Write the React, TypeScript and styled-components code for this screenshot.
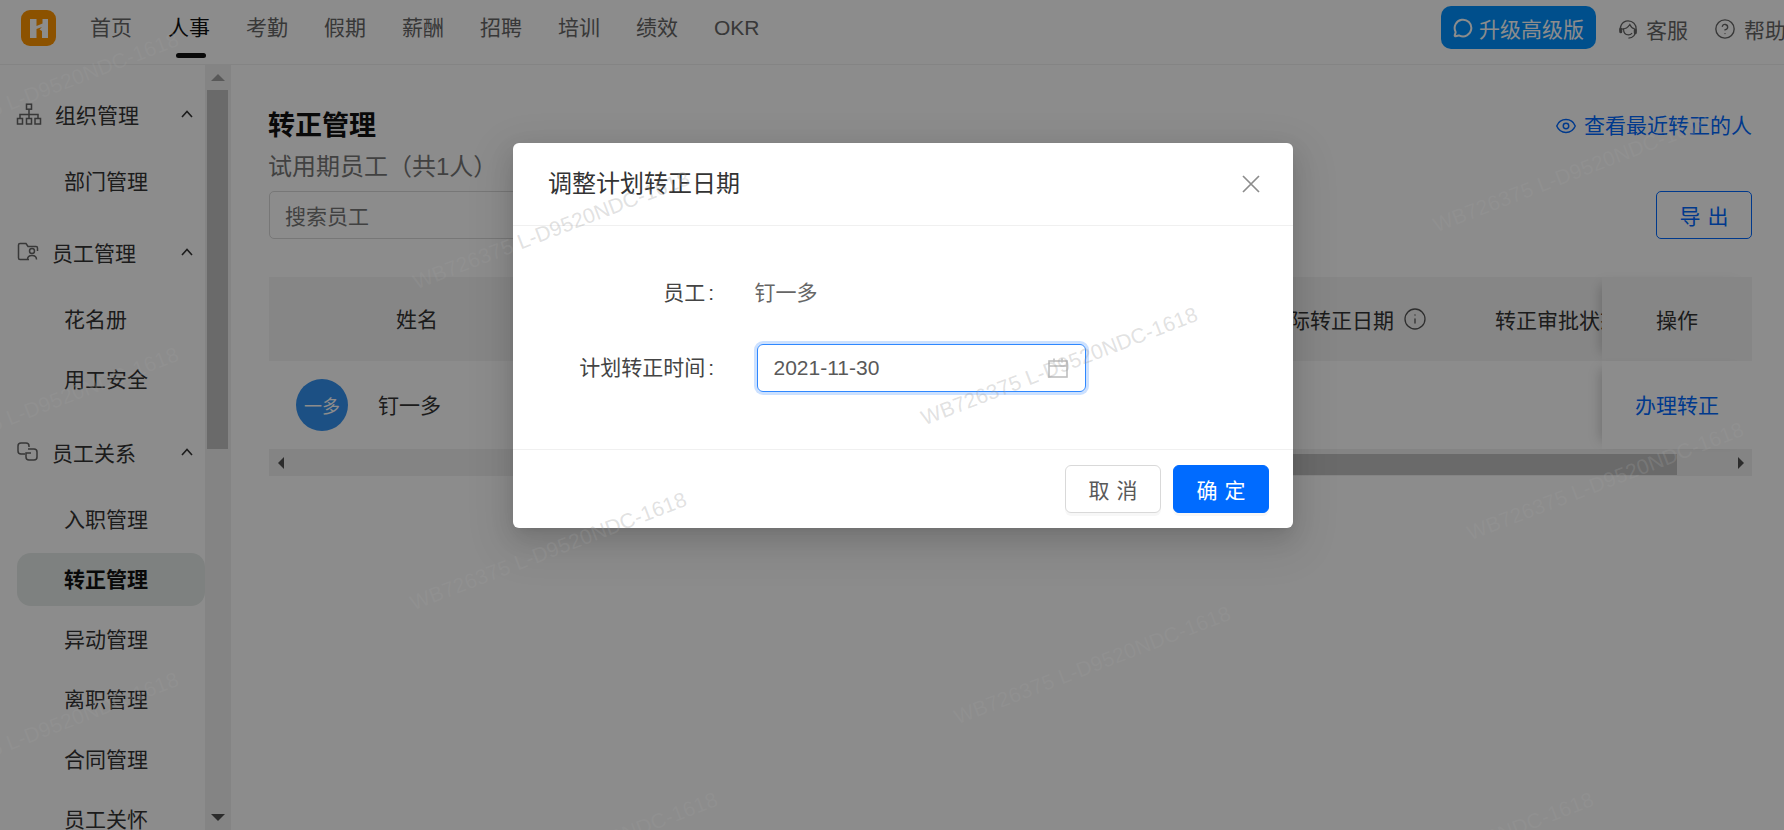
import React from "react";
import styled, { createGlobalStyle } from "styled-components";
import { CircleHelp, Eye, Info, MessageCircle } from "lucide-react";

const Global = createGlobalStyle`
  html, body { margin: 0; padding: 0; height: 100%; overflow: hidden; background: #fff; }
  body { font-family: "Liberation Sans", "Noto Sans CJK SC", sans-serif; font-size: 21px; color: #333; }
  * { box-sizing: border-box; }
`;

const Page = styled.div`
  width: 1784px; height: 830px; display: flex; flex-direction: column; overflow: hidden; position: relative;
`;

const Header = styled.header`
  height: 65px; flex: none; display: flex; align-items: center; padding: 0 0 9px 21px;
  border-bottom: 1px solid #f0f0f0; overflow: hidden;
`;
const Logo = styled.svg`
  width: 35px; height: 36px; flex: none;
`;
const TopNav = styled.nav`
  display: flex; gap: 36px; margin-left: 34px;
`;
const TopLink = styled.a<{ $active?: boolean }>`
  position: relative; min-width: 42px; line-height: 30px; color: ${(p) => (p.$active ? "#111" : "#666")};
  &::after {
    content: ""; display: ${(p) => (p.$active ? "block" : "none")}; position: absolute; left: 8px; top: 40px;
    width: 30px; height: 5px; border-radius: 3px; background: #111;
  }
`;
const HeaderRight = styled.div`
  margin-left: auto; margin-right: -2px; display: flex; align-items: center; flex: none;
`;
const UpgradeButton = styled.button`
  width: 155px; height: 43px; border: 0; border-radius: 10px; background: #0091ff; color: #fff;
  font: inherit; display: flex; align-items: center; gap: 6px; padding: 0 0 0 12px; margin-right: 22px;
`;
const HeaderLink = styled.span`
  display: flex; align-items: center; gap: 8px; color: #666; line-height: 30px; margin: 6px 26px 0 0;
  &:last-child { margin-right: 0; }
  svg { flex: none; margin-top: -3px; }
`;

const Content = styled.div`
  flex: 1; display: flex; min-height: 0;
`;
const Sidebar = styled.aside`
  width: 231px; flex: none; display: flex;
`;
const SideMenu = styled.div`
  width: 205px; flex: none; overflow: hidden; padding-top: 19px;
`;
const Group = styled.section<{ $tail: number }>`
  display: flex; flex-direction: column; gap: 7px; padding-bottom: ${(p) => p.$tail}px;
`;
const GroupHead = styled.div<{ $gap: number; $after: number }>`
  height: 60px; margin-bottom: ${(p) => p.$after}px; display: flex; align-items: center; padding: 0 12px 0 16px;
  gap: ${(p) => p.$gap}px; color: #333; flex: none;
  svg:last-child { margin-left: auto; }
`;
const SideItem = styled.div<{ $active?: boolean }>`
  height: 53px; flex: none; margin-left: 17px; padding-left: 47px; line-height: 53px; border-radius: 14px;
  background: ${(p) => (p.$active ? "#e6ebe9" : "transparent")};
  color: ${(p) => (p.$active ? "#111" : "#333")};
  font-weight: ${(p) => (p.$active ? 700 : 400)};
`;
const VScrollbar = styled.div`
  width: 26px; flex: none; background: #f1f1f1; display: flex; flex-direction: column; align-items: center;
  justify-content: space-between; position: relative;
`;
const VThumb = styled.div`
  position: absolute; left: 2px; top: 25px; width: 21px; height: 359px; background: #c1c1c1;
`;
const ArrowCell = styled.div`
  height: 25px; display: flex; align-items: center; justify-content: center;
`;
const Triangle = styled.i<{ $dir: "up" | "down" | "left" | "right"; $color: string }>`
  display: block; width: 0; height: 0; border-style: solid; border-color: transparent;
  ${(p) =>
    p.$dir === "up"
      ? `border-width: 0 7px 7px; border-bottom-color: ${p.$color};`
      : p.$dir === "down"
      ? `border-width: 7px 7px 0; border-top-color: ${p.$color};`
      : p.$dir === "left"
      ? `border-width: 6px 6px 6px 0; border-right-color: ${p.$color};`
      : `border-width: 6px 0 6px 6px; border-left-color: ${p.$color};`}
`;

const Main = styled.main`
  flex: 1; min-width: 0; padding: 43px 32px 0 38px;
`;
const TitleRow = styled.div`
  display: flex; align-items: center; justify-content: space-between; height: 36px;
`;
const Title = styled.h1`
  margin: 0 0 0 -1px; font-size: 27px; font-weight: 700; color: #111; line-height: 36px;
`;
const RecentLink = styled.a`
  display: flex; align-items: center; gap: 7px; color: #0069ff; line-height: 30px;
`;
const SubTitle = styled.div`
  margin: 5px 0 0 -1px; font-size: 24px; line-height: 36px; color: #777;
`;
const Toolbar = styled.div`
  margin-top: 6px; display: flex; justify-content: space-between;
`;
const Search = styled.input`
  width: 420px; height: 48px; border: 1px solid #d9d9d9; border-radius: 5px; padding: 3px 15px 0; font: inherit; color: #333;
  &::placeholder { color: #777; opacity: 1; }
`;
const OutlineButton = styled.button`
  width: 96px; height: 48px; border: 1.5px solid #0069ff; border-radius: 5px; background: #fff; color: #0069ff;
  font: inherit; padding: 0; letter-spacing: 7px; text-indent: 7px;
`;

const Table = styled.div`
  margin-top: 38px; width: 1483px; position: relative;
`;
const HeadRow = styled.div`
  height: 84px; display: flex; align-items: center; background: #f5f5f5; color: #333;
`;
const BodyRow = styled.div`
  height: 88px; display: flex; align-items: center; background: #fff;
`;
const NameHead = styled.div`
  width: 296px; flex: none; text-align: center; padding-bottom: 2px;
`;
const Filler = styled.div`
  flex: 1;
`;
const DateHead = styled.div`
  width: 159px; flex: none; display: flex; align-items: center; justify-content: space-between; white-space: nowrap;
`;
const StatusHead = styled.div`
  width: 107px; margin-left: 68px; flex: none; overflow: hidden; white-space: nowrap;
`;
const FixedCell = styled.div<{ $head?: boolean }>`
  width: 150px; height: 100%; flex: none; display: flex; align-items: center; justify-content: center;
  background: ${(p) => (p.$head ? "#f5f5f5" : "#fff")};
  color: ${(p) => (p.$head ? "#333" : "#0069ff")};
  padding-bottom: ${(p) => (p.$head ? 0 : 3)}px;
  box-shadow: -9px 0 12px -8px rgba(0, 0, 0, 0.22);
  position: relative;
`;
const Person = styled.div`
  display: flex; align-items: center; padding-left: 27px; gap: 30px;
`;
const PersonName = styled.span`
  padding-bottom: 2px;
`;
const Avatar = styled.div`
  width: 52px; height: 52px; border-radius: 50%; background: #3392f0; color: #fff; font-size: 18px;
  display: flex; align-items: center; justify-content: center;
`;
const HScrollbar = styled.div`
  height: 27px; background: #f1f1f1; display: flex; align-items: center; padding: 0 8px 0 9px;
`;
const HThumb = styled.div`
  height: 21px; margin: 4px 0 0; flex: 1; margin-left: 300px; margin-right: 61px; background: #c1c1c1;
`;

const Overlay = styled.div`
  position: absolute; inset: 0; background: rgba(0, 0, 0, 0.45); display: flex; justify-content: center;
  align-items: flex-start; padding: 143px 0 0 22px;
`;
const Dialog = styled.div`
  width: 780px; height: 385px; background: #fff; border-radius: 6px; display: flex; flex-direction: column;
  box-shadow: 0 4px 9px -6px rgba(0, 0, 0, 0.12), 0 9px 24px rgba(0, 0, 0, 0.12), 0 14px 42px 12px rgba(0, 0, 0, 0.07);
`;
const DialogHead = styled.div`
  height: 83px; flex: none; border-bottom: 1px solid #f0f0f0; display: flex; align-items: center;
  justify-content: space-between; padding: 0 33px 0 35px;
`;
const DialogTitle = styled.div`
  font-size: 24px; color: #333; line-height: 36px;
`;
const DialogBody = styled.div`
  flex: 1; padding-top: 43px; display: grid; grid-template-columns: 204px 329px; column-gap: 39.5px; row-gap: 27px;
  grid-auto-rows: 48px; align-items: center;
`;
const FieldLabel = styled.label`
  text-align: right; padding: 0 3px 4px 0; color: #444;
  &::after { content: ":"; margin: 0 0 0 3px; }
`;
const FieldValue = styled.div`
  color: #666; padding-bottom: 4px; margin-left: -2px;
`;
const DateBox = styled.div`
  height: 48px; border: 1.5px solid #2f88ff; border-radius: 6px; box-shadow: 0 0 0 3px rgba(0, 105, 255, 0.2);
  display: flex; align-items: center; justify-content: space-between; padding: 0 17px 0 16px; color: #595959;
`;
const DialogFoot = styled.div`
  height: 79px; flex: none; border-top: 1px solid #f0f0f0; padding: 15px 24px; display: flex; justify-content: flex-end; gap: 12px;
`;
const DialogButton = styled.button<{ $primary?: boolean }>`
  width: 96px; height: 48px; border-radius: 6px; font: inherit; padding: 0; letter-spacing: 7px; text-indent: 7px;
  border: 1.5px solid ${(p) => (p.$primary ? "#006bff" : "#d9d9d9")};
  background: ${(p) => (p.$primary ? "#006bff" : "#fff")};
  color: ${(p) => (p.$primary ? "#fff" : "#595959")};
  box-shadow: 0 3px 0 rgba(0, 0, 0, 0.03);
`;
const Watermarks = styled.div`
  position: absolute; inset: 0; overflow: hidden; pointer-events: none;
`;
const Mark = styled.span.attrs<{ $x: number; $y: number }>((p) => ({
  style: { left: p.$x, top: p.$y - 11 },
}))<{ $x: number; $y: number }>`
  position: absolute; white-space: nowrap; line-height: 22px; font-size: 21px; font-family: "Liberation Sans", sans-serif;
  letter-spacing: 0.2px; color: rgba(155, 155, 155, 0.3); transform: rotate(-21deg); transform-origin: 0 50%;
`;

const Chevron = () => (
  <svg width="12" height="8" viewBox="0 0 12 8" fill="none" stroke="#333" strokeWidth="1.6">
    <path d="M1 7l5-5.500L11 7" />
  </svg>
);
const OrgIcon = () => (
  <svg width="26" height="22" viewBox="0 0 26 22" fill="none" stroke="#666" strokeWidth="1.5">
    <rect x="10.5" y="1.2" width="5" height="5" />
    <rect x="1.5" y="15.5" width="5" height="5.5" />
    <rect x="10.5" y="15.5" width="5" height="5.5" />
    <rect x="19" y="15.5" width="5.5" height="5.5" />
    <path d="M13 6.500v5M4 15.500v-4h18v4M13 11.500v4" />
  </svg>
);
const FolderIcon = () => (
  <svg width="26" height="22" viewBox="0 0 26 22" fill="none" stroke="#666" strokeWidth="1.5">
    <path d="M13 18.500H4a1.500 1.500 0 0 1-1.500-1.500V4a1.500 1.500 0 0 1 1.500-1.500h6l2 3h8a1.500 1.500 0 0 1 1.500 1.500v3" />
    <circle cx="16" cy="10" r="2.500" />
    <path d="M11.500 18.500c0-2.800 2-4 4.500-4s4.500 1.200 4.500 4" />
  </svg>
);
const LinkedIcon = () => (
  <svg width="26" height="22" viewBox="0 0 26 22" fill="none" stroke="#666" strokeWidth="1.5">
    <path d="M9 13H5a3 3 0 0 1-3-3V5a3 3 0 0 1 3-3h5a3 3 0 0 1 3 3v1" />
    <path d="M12 8h6a3 3 0 0 1 3 3v5a3 3 0 0 1-3 3h-5a3 3 0 0 1-3-3v-4h5" />
  </svg>
);
const HeadsetIcon = () => (
  <svg width="20" height="21" viewBox="0 0 22 23" fill="none" stroke="#666" strokeWidth="1.300">
    <path d="M3 14.500C1 9 4.500 2 11 2c5.500 0 9 4 9 9 0 6-3.500 10-8.500 10" />
    <path d="M4 11c3 0 7-1.500 9-5 1 2.500 3.500 4.500 5.500 5" />
    <path d="M6 10.500c0 4 2 7 5.500 7 1.500 0 3-.8 4-2" />
    <rect x="2" y="10" width="2" height="5" rx="1" fill="#666" />
    <rect x="18" y="11" width="2" height="5" rx="1" fill="#666" />
  </svg>
);
const CalendarIcon = () => (
  <svg width="20" height="20" viewBox="0 0 20 20" fill="none" stroke="#bfbfbf" strokeWidth="1.600">
    <rect x="1" y="3" width="18" height="16" />
    <path d="M1 8h18M6 .5v4M14 .5v4" />
  </svg>
);
const CloseIcon = () => (
  <svg width="18" height="18" viewBox="0 0 18 18" fill="none" stroke="#8c8c8c" strokeWidth="1.700">
    <path d="M1 1l16 16M17 1L1 17" />
  </svg>
);

const topLinks = ["首页", "人事", "考勤", "假期", "薪酬", "招聘", "培训", "绩效", "OKR"];
const marks: [number, number][] = [
  [-97, 144], [-97, 459], [-97, 784], [414, 283], [411, 604], [922, 419],
  [955, 718], [1434, 226], [1468, 534], [442, 904], [1318, 904],
];

export default function App() {
  return (
    <Page>
      <Global />
      <Header>
        <Logo viewBox="0 0 35 36">
          <rect width="35" height="36" rx="9" fill="#ff9500" />
          <path d="M9 9h6.500v7l6-2.500V9H27v19h-6v-7l-2.500-1.500L21 17l-5.500 2v9H9z" fill="#fff" />
        </Logo>
        <TopNav>
          {topLinks.map((t) => (
            <TopLink key={t} $active={t === "人事"}>{t}</TopLink>
          ))}
        </TopNav>
        <HeaderRight>
          <UpgradeButton>
            <MessageCircle size={20} strokeWidth={2.4} />
            升级高级版
          </UpgradeButton>
          <HeaderLink><HeadsetIcon />客服</HeaderLink>
          <HeaderLink><CircleHelp size={22} strokeWidth={1.5} color="#666" />帮助</HeaderLink>
        </HeaderRight>
      </Header>
      <Content>
        <Sidebar>
          <SideMenu>
            <Group $tail={13.5}>
              <GroupHead $gap={13} $after={4}><OrgIcon />组织管理<Chevron /></GroupHead>
              <SideItem>部门管理</SideItem>
            </Group>
            <Group $tail={16}>
              <GroupHead $gap={10} $after={4}><FolderIcon />员工管理<Chevron /></GroupHead>
              <SideItem>花名册</SideItem>
              <SideItem>用工安全</SideItem>
            </Group>
            <Group $tail={0}>
              <GroupHead $gap={10} $after={4}><LinkedIcon />员工关系<Chevron /></GroupHead>
              <SideItem>入职管理</SideItem>
              <SideItem $active>转正管理</SideItem>
              <SideItem>异动管理</SideItem>
              <SideItem>离职管理</SideItem>
              <SideItem>合同管理</SideItem>
              <SideItem>员工关怀</SideItem>
            </Group>
          </SideMenu>
          <VScrollbar>
            <ArrowCell><Triangle $dir="up" $color="#a3a3a3" /></ArrowCell>
            <VThumb />
            <ArrowCell><Triangle $dir="down" $color="#505050" /></ArrowCell>
          </VScrollbar>
        </Sidebar>
        <Main>
          <TitleRow>
            <Title>转正管理</Title>
            <RecentLink><Eye size={22} strokeWidth={1.6} />查看最近转正的人</RecentLink>
          </TitleRow>
          <SubTitle>试用期员工（共1人）</SubTitle>
          <Toolbar>
            <Search placeholder="搜索员工" readOnly />
            <OutlineButton>导出</OutlineButton>
          </Toolbar>
          <Table>
            <HeadRow>
              <NameHead>姓名</NameHead>
              <Filler />
              <DateHead>实际转正日期<Info size={24} strokeWidth={1.3} color="#555" /></DateHead>
              <StatusHead>转正审批状态</StatusHead>
              <FixedCell $head>操作</FixedCell>
            </HeadRow>
            <BodyRow>
              <Person><Avatar>一多</Avatar><PersonName>钉一多</PersonName></Person>
              <Filler />
              <FixedCell>办理转正</FixedCell>
            </BodyRow>
            <HScrollbar>
              <Triangle $dir="left" $color="#505050" />
              <HThumb />
              <Triangle $dir="right" $color="#505050" />
            </HScrollbar>
          </Table>
        </Main>
      </Content>
      <Overlay>
        <Dialog>
          <DialogHead>
            <DialogTitle>调整计划转正日期</DialogTitle>
            <CloseIcon />
          </DialogHead>
          <DialogBody>
            <FieldLabel>员工</FieldLabel>
            <FieldValue>钉一多</FieldValue>
            <FieldLabel>计划转正时间</FieldLabel>
            <DateBox>2021-11-30<CalendarIcon /></DateBox>
          </DialogBody>
          <DialogFoot>
            <DialogButton>取消</DialogButton>
            <DialogButton $primary>确定</DialogButton>
          </DialogFoot>
        </Dialog>
      </Overlay>
      <Watermarks>
        {marks.map(([x, y]) => (
          <Mark key={`${x}-${y}`} $x={x} $y={y}>WB726375 L-D9520NDC-1618</Mark>
        ))}
      </Watermarks>
    </Page>
  );
}
